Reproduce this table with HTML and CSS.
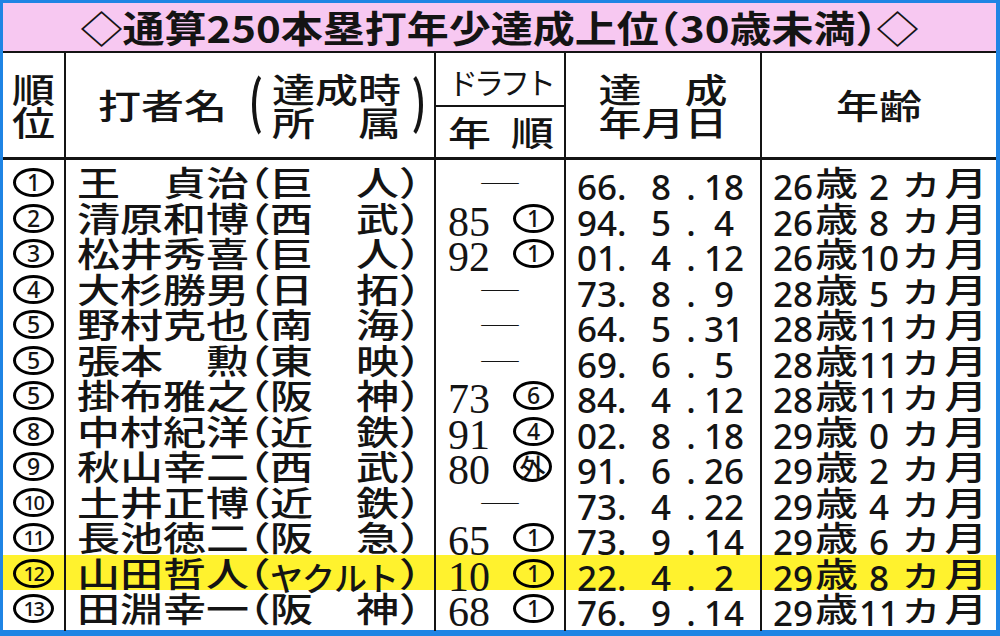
FILE: index.html
```html
<!DOCTYPE html>
<html lang="ja">
<head>
<meta charset="utf-8">
<title>通算250本塁打年少達成上位</title>
<link rel="stylesheet" href="styles.css">
</head>
<body>
<div class="frame">
  <div class="title"><span class="tt">◇通算250本塁打年少達成上位<span class="half">（</span>30歳未満<span class="half">）</span>◇</span></div>

  <div class="row head">
    <div class="h-rank"><span class="k">順</span><span class="k">位</span></div>
    <div class="h-name">
      <span class="k">打者名</span>
      <span class="bp l"></span>
      <span class="stack"><span class="k">達成時</span><span class="k">所　属</span></span>
      <span class="bp r"></span>
    </div>
    <div class="h-draft">
      <div class="top">ドラフト</div>
      <div class="bot"><span class="k">年</span><span class="k">順</span></div>
    </div>
    <div class="h-date"><span class="k">達　成</span><span class="k">年月日</span></div>
    <div class="h-age"><span class="k">年齢</span></div>
  </div>

  <div class="row d first">
    <div class="rk"><span class="ring">1</span></div>
    <div class="nm"><span class="k name">王　貞治</span><span class="k p half">（</span><span class="k team"><span>巨</span><span>人</span></span><span class="k p half">）</span></div>
    <div class="dr"><span class="dash">―</span></div>
    <div class="dt"><span class="n y">66.</span><span class="n m">8</span><span class="n dot">.</span><span class="n dd">18</span></div>
    <div class="ag"><span class="n a">26</span><span class="k">歳</span><span class="n mo">2</span><span class="k ka">カ</span><span class="k tk">月</span></div>
  </div>

  <div class="row d">
    <div class="rk"><span class="ring">2</span></div>
    <div class="nm"><span class="k name">清原和博</span><span class="k p half">（</span><span class="k team"><span>西</span><span>武</span></span><span class="k p half">）</span></div>
    <div class="dr"><span class="yr">85</span><span class="ring">1</span></div>
    <div class="dt"><span class="n y">94.</span><span class="n m">5</span><span class="n dot">.</span><span class="n dd">4</span></div>
    <div class="ag"><span class="n a">26</span><span class="k">歳</span><span class="n mo">8</span><span class="k ka">カ</span><span class="k tk">月</span></div>
  </div>

  <div class="row d">
    <div class="rk"><span class="ring">3</span></div>
    <div class="nm"><span class="k name">松井秀喜</span><span class="k p half">（</span><span class="k team"><span>巨</span><span>人</span></span><span class="k p half">）</span></div>
    <div class="dr"><span class="yr">92</span><span class="ring">1</span></div>
    <div class="dt"><span class="n y">01.</span><span class="n m">4</span><span class="n dot">.</span><span class="n dd">12</span></div>
    <div class="ag"><span class="n a">26</span><span class="k">歳</span><span class="n mo">10</span><span class="k ka">カ</span><span class="k tk">月</span></div>
  </div>

  <div class="row d">
    <div class="rk"><span class="ring">4</span></div>
    <div class="nm"><span class="k name">大杉勝男</span><span class="k p half">（</span><span class="k team"><span>日</span><span>拓</span></span><span class="k p half">）</span></div>
    <div class="dr"><span class="dash">―</span></div>
    <div class="dt"><span class="n y">73.</span><span class="n m">8</span><span class="n dot">.</span><span class="n dd">9</span></div>
    <div class="ag"><span class="n a">28</span><span class="k">歳</span><span class="n mo">5</span><span class="k ka">カ</span><span class="k tk">月</span></div>
  </div>

  <div class="row d">
    <div class="rk"><span class="ring">5</span></div>
    <div class="nm"><span class="k name">野村克也</span><span class="k p half">（</span><span class="k team"><span>南</span><span>海</span></span><span class="k p half">）</span></div>
    <div class="dr"><span class="dash">―</span></div>
    <div class="dt"><span class="n y">64.</span><span class="n m">5</span><span class="n dot">.</span><span class="n dd">31</span></div>
    <div class="ag"><span class="n a">28</span><span class="k">歳</span><span class="n mo">11</span><span class="k ka">カ</span><span class="k tk">月</span></div>
  </div>

  <div class="row d">
    <div class="rk"><span class="ring">5</span></div>
    <div class="nm"><span class="k name">張本　勲</span><span class="k p half">（</span><span class="k team"><span>東</span><span>映</span></span><span class="k p half">）</span></div>
    <div class="dr"><span class="dash">―</span></div>
    <div class="dt"><span class="n y">69.</span><span class="n m">6</span><span class="n dot">.</span><span class="n dd">5</span></div>
    <div class="ag"><span class="n a">28</span><span class="k">歳</span><span class="n mo">11</span><span class="k ka">カ</span><span class="k tk">月</span></div>
  </div>

  <div class="row d">
    <div class="rk"><span class="ring">5</span></div>
    <div class="nm"><span class="k name">掛布雅之</span><span class="k p half">（</span><span class="k team"><span>阪</span><span>神</span></span><span class="k p half">）</span></div>
    <div class="dr"><span class="yr">73</span><span class="ring">6</span></div>
    <div class="dt"><span class="n y">84.</span><span class="n m">4</span><span class="n dot">.</span><span class="n dd">12</span></div>
    <div class="ag"><span class="n a">28</span><span class="k">歳</span><span class="n mo">11</span><span class="k ka">カ</span><span class="k tk">月</span></div>
  </div>

  <div class="row d">
    <div class="rk"><span class="ring">8</span></div>
    <div class="nm"><span class="k name">中村紀洋</span><span class="k p half">（</span><span class="k team"><span>近</span><span>鉄</span></span><span class="k p half">）</span></div>
    <div class="dr"><span class="yr">91</span><span class="ring">4</span></div>
    <div class="dt"><span class="n y">02.</span><span class="n m">8</span><span class="n dot">.</span><span class="n dd">18</span></div>
    <div class="ag"><span class="n a">29</span><span class="k">歳</span><span class="n mo">0</span><span class="k ka">カ</span><span class="k tk">月</span></div>
  </div>

  <div class="row d">
    <div class="rk"><span class="ring">9</span></div>
    <div class="nm"><span class="k name">秋山幸二</span><span class="k p half">（</span><span class="k team"><span>西</span><span>武</span></span><span class="k p half">）</span></div>
    <div class="dr"><span class="yr">80</span><span class="ring gai">外</span></div>
    <div class="dt"><span class="n y">91.</span><span class="n m">6</span><span class="n dot">.</span><span class="n dd">26</span></div>
    <div class="ag"><span class="n a">29</span><span class="k">歳</span><span class="n mo">2</span><span class="k ka">カ</span><span class="k tk">月</span></div>
  </div>

  <div class="row d">
    <div class="rk"><span class="ring two">10</span></div>
    <div class="nm"><span class="k name">土井正博</span><span class="k p half">（</span><span class="k team"><span>近</span><span>鉄</span></span><span class="k p half">）</span></div>
    <div class="dr"><span class="dash">―</span></div>
    <div class="dt"><span class="n y">73.</span><span class="n m">4</span><span class="n dot">.</span><span class="n dd">22</span></div>
    <div class="ag"><span class="n a">29</span><span class="k">歳</span><span class="n mo">4</span><span class="k ka">カ</span><span class="k tk">月</span></div>
  </div>

  <div class="row d">
    <div class="rk"><span class="ring two">11</span></div>
    <div class="nm"><span class="k name">長池徳二</span><span class="k p half">（</span><span class="k team"><span>阪</span><span>急</span></span><span class="k p half">）</span></div>
    <div class="dr"><span class="yr">65</span><span class="ring">1</span></div>
    <div class="dt"><span class="n y">73.</span><span class="n m">9</span><span class="n dot">.</span><span class="n dd">14</span></div>
    <div class="ag"><span class="n a">29</span><span class="k">歳</span><span class="n mo">6</span><span class="k ka">カ</span><span class="k tk">月</span></div>
  </div>

  <div class="row d hl">
    <div class="rk"><span class="ring two">12</span></div>
    <div class="nm"><span class="k name">山田哲人</span><span class="k p half">（</span><span class="team kt"><span>ヤ</span><span>ク</span><span>ル</span><span>ト</span></span><span class="k p half">）</span></div>
    <div class="dr"><span class="yr">10</span><span class="ring">1</span></div>
    <div class="dt"><span class="n y">22.</span><span class="n m">4</span><span class="n dot">.</span><span class="n dd">2</span></div>
    <div class="ag"><span class="n a">29</span><span class="k">歳</span><span class="n mo">8</span><span class="k ka">カ</span><span class="k tk">月</span></div>
  </div>

  <div class="row d last">
    <div class="rk"><span class="ring two">13</span></div>
    <div class="nm"><span class="k name">田淵幸一</span><span class="k p half">（</span><span class="k team"><span>阪</span><span>神</span></span><span class="k p half">）</span></div>
    <div class="dr"><span class="yr">68</span><span class="ring">1</span></div>
    <div class="dt"><span class="n y">76.</span><span class="n m">9</span><span class="n dot">.</span><span class="n dd">14</span></div>
    <div class="ag"><span class="n a">29</span><span class="k">歳</span><span class="n mo">11</span><span class="k ka">カ</span><span class="k tk">月</span></div>
  </div>
</div>
</body>
</html>
```

FILE: styles.css
```css
* { box-sizing: border-box; margin: 0; padding: 0; }
html, body { width: 1000px; height: 636px; overflow: hidden; }
body {
  background: #1f84e4;
  font-family: "Noto Sans CJK JP", "Noto Sans CJK SC", sans-serif;
  color: #141414;
}
.frame { width: 993px; margin: 3px 0 0 3px; background: #fff; }

/* title */
.title {
  height: 50px;
  background: #f7c8f1;
  border-bottom: 2px solid #141414;
  display: flex;
  align-items: center;
  justify-content: center;
}
.tt {
  display: inline-block;
  font-size: 42px;
  font-weight: 700;
  line-height: 1;
  transform: scaleY(.88);
}
.half { font-feature-settings: "halt" 1; }

/* grid rows */
.row { display: grid; grid-template-columns: 61px 370px 130px 196px 236px; }
.row > div { border-left: 2px solid #141414; white-space: nowrap; }
.row > div:first-child { border-left: none; }

.k {
  display: inline-block;
  font-size: 43px;
  font-weight: 500;
  transform: scaleY(.78);
}

/* header */
.head { height: 107px; border-bottom: 3px solid #141414; }
.head > div {
  display: flex;
  flex-direction: column;
  align-items: center;
  justify-content: center;
  line-height: 33.5px;
}
.head .h-name { flex-direction: row; justify-content: flex-start; padding-left: 32px; }
.stack { display: flex; flex-direction: column; }
.bp { width: 30px; height: 72px; border: 4px solid transparent; border-radius: 50%; }
.bp.l { border-left-color: #141414; margin-left: 25px; margin-right: -10px; }
.bp.r { border-right-color: #141414; width: 34px; margin-left: -12px; }

.head .h-draft { justify-content: flex-start; align-items: stretch; }
.h-draft .top {
  height: 54px;
  border-bottom: 2px solid #141414;
  display: flex;
  align-items: center;
  justify-content: center;
  padding-top: 6px;
  font-size: 30px;
  letter-spacing: -4px;
}
.h-draft .bot {
  flex: 1;
  display: flex;
  align-items: center;
  justify-content: space-between;
  padding: 0 10px 0 12px;
}

/* data rows */
.d { height: 35.5px; font-size: 43px; line-height: 35.5px; }
.d.first, .d.last { height: 39.5px; }
.d.first > div { padding-top: 4px; }
.hl { background: #fff22e; }

.rk { text-align: center; }
.nm { padding-left: 11px; }
.name { width: 172px; }
.p { width: 21px; }
.team { display: inline-flex; justify-content: space-between; width: 129px; }
.team.kt { font-size: 33px; font-weight: 500; width: 128px; margin-right: 1px; }
.team.kt > span { width: 32px; }

/* circled numbers */
.ring {
  display: inline-block;
  width: 41px;
  height: 29px;
  vertical-align: top;
  margin-top: 4px;
  border: 3px solid #000;
  border-radius: 50%;
  text-align: center;
  font-family: "Noto Sans", sans-serif;
  font-weight: 500;
  font-size: 23px;
  line-height: 23px;
}
.ring.two { font-size: 20px; letter-spacing: -1.5px; }
.ring.gai {
  font-family: "Noto Sans CJK JP", sans-serif;
  font-size: 26px;
  width: 39px;
  height: 31px;
  line-height: 25px;
  margin-top: 3px;
}

.dr { padding-left: 12px; }
.dr .dash {
  display: block;
  text-align: center;
  margin-left: -12px;
  font-size: 44px;
  transform: scaleY(.6);
}
.yr {
  display: inline-block;
  width: 65px;
  font-family: "Liberation Serif", serif;
  font-size: 42px;
}

.n {
  display: inline-block;
  font-family: "Noto Sans", "Open Sans", sans-serif;
  font-weight: 500;
  font-size: 35px;
  text-align: center;
}
.dt { padding-left: 11px; }
.dt .y { width: 63px; text-align: left; }
.dt .m { width: 42px; }
.dt .dot { width: 18px; }
.dt .dd { width: 48px; }

.ag { padding-left: 11px; }
.ag .a { width: 42px; text-align: left; }
.ag .mo { width: 42px; }
.ag .ka { width: 42px; text-align: center; font-size: 38px; }
.ag .tk { width: 48px; text-align: center; }
```
